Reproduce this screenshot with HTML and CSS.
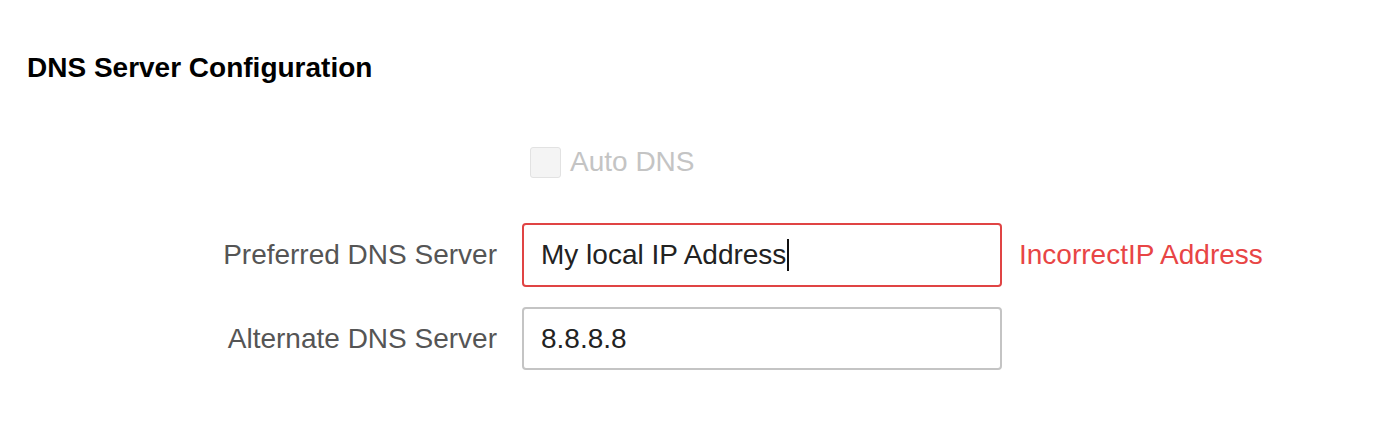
FILE: index.html
```html
<!DOCTYPE html>
<html>
<head>
<meta charset="utf-8">
<link rel="stylesheet" href="styles.css">
</head>
<body>
<div class="page">
  <h2 class="title">DNS Server Configuration</h2>
  <div class="form">
    <div class="row check-row">
      <div class="label"></div>
      <label class="check">
        <span class="box"></span>
        <span class="check-text">Auto DNS</span>
      </label>
    </div>
    <div class="row">
      <div class="label">Preferred DNS Server</div>
      <div class="input error">My local IP Address<span class="caret"></span></div>
      <div class="err-msg">IncorrectIP Address</div>
    </div>
    <div class="row second">
      <div class="label">Alternate DNS Server</div>
      <div class="input">8.8.8.8</div>
    </div>
  </div>
</div>
</body>
</html>
```
FILE: styles.css
```css
html, body {
  margin: 0;
  padding: 0;
  background: #ffffff;
}
body {
  font-family: "Liberation Sans", Arial, Helvetica, sans-serif;
}
.page {
  padding: 52px 0 0 27px;
}
.title {
  margin: 0;
  font-size: 28px;
  line-height: 32px;
  font-weight: bold;
  color: #000;
}
.form {
  display: flex;
  flex-direction: column;
  margin-top: 62px;
}
.row {
  display: flex;
  align-items: center;
  gap: 25px;
  margin-left: -27px;
}
.label {
  width: 497px;
  text-align: right;
  font-size: 28px;
  color: #555;
  flex: none;
}
.check-row {
  height: 32px;
  margin-bottom: 45px;
}
.check {
  display: flex;
  align-items: center;
  gap: 9px;
  margin-left: 8px;
}
.box {
  width: 29px;
  height: 29px;
  border: 1px solid #e2e2e2;
  background: #f4f4f4;
  border-radius: 3px;
}
.check-text {
  font-size: 28px;
  color: #c4c4c4;
}
.input {
  box-sizing: border-box;
  width: 480px;
  height: 63px;
  border: 2px solid #c4c4c4;
  border-radius: 4px;
  padding: 0 17px;
  display: flex;
  align-items: center;
  font-size: 28px;
  color: #222;
  flex: none;
}
.second {
  margin-top: 20px;
}
.input.error {
  border-color: #e04444;
  height: 64px;
}
.caret {
  display: inline-block;
  width: 2px;
  height: 32px;
  background: #111;
  margin-left: 1px;
}
.err-msg {
  margin-left: -8px;
  font-size: 28px;
  color: #e84545;
}
```
